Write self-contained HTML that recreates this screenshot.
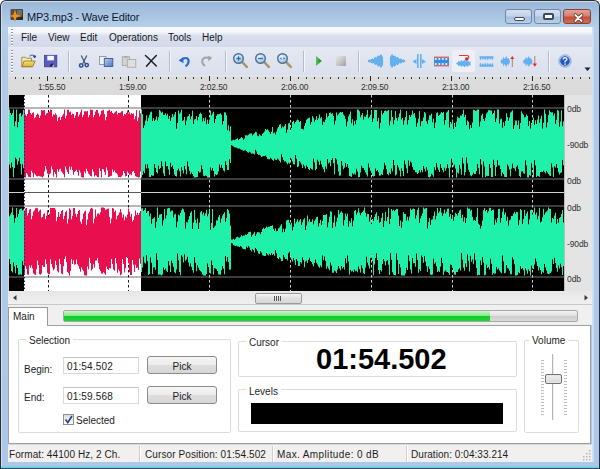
<!DOCTYPE html>
<html><head><meta charset="utf-8">
<style>
*{margin:0;padding:0;box-sizing:border-box}
html,body{width:600px;height:469px;overflow:hidden;background:#fff}
body{font-family:"Liberation Sans",sans-serif;font-size:10px;color:#1e1e1e;position:relative}
.a{position:absolute}
#frame{left:0;top:0;width:600px;height:469px;background:linear-gradient(#9bb8d8 2px,#a6c2e0 12px,#b5cfea 26px,#b0cbe9 60px,#abc8e8);border:1px solid #2c2f36;border-bottom-color:#3a4a5a;border-radius:6px 6px 0 0;box-shadow:inset 0 1px 0 #d0dfee,inset 1px 0 0 #d0dfee}
#title{left:27px;top:11px;font-size:11px;letter-spacing:-0.2px;color:#101a2c;white-space:nowrap}
.wb{top:9px;height:15px;border:1px solid #7088a6;border-radius:3px;background:linear-gradient(#d3e1f0,#c2d4ea 45%,#a9bfdc 55%,#b9cfe8)}
#menubar{left:8px;top:27px;width:584px;height:21px;background:linear-gradient(#f8fafd 0,#f3f5fa 5px,#d9dfee 9px,#d3daeb 100%);border-bottom:1px solid #e6eaf3}
.mi{top:32px;font-size:10px;color:#161a22}
#toolbar{left:8px;top:48px;width:584px;height:27px;background:linear-gradient(#e4e8f2,#dae0ed)}
.sep{top:51px;width:1px;height:21px;background:#b4bccb;box-shadow:1px 0 0 #f4f6fa}
#ruler{left:8px;top:75px;width:584px;height:20px;background:linear-gradient(#e6e6e6,#dcdcdc 3px,#dbdbdb)}
.tick{top:77px;width:1px;height:2px;background:#333}
.mtick{top:76px;width:1px;height:5px;background:#222}
.rl{top:82px;font-size:8.5px;letter-spacing:-0.15px;color:#303030}
#wave{left:9px;top:95px;width:583px;height:196px;background:#000;box-shadow:-1px 0 0 #d4d4d4}
#dbcol{left:564px;top:95px;width:28px;height:196px;background:#e4e4e4;border-left:1px solid #bbb}
.db{font-size:8.5px;letter-spacing:-0.1px;color:#303030;left:567px}
#hscroll{left:8px;top:291px;width:584px;height:14px;background:linear-gradient(#e6e6e6,#f0f0f0);border-bottom:1px solid #c8c8c8}
#tabarea{left:8px;top:305px;width:584px;height:20px;background:#f0f0f0}
#panel{left:8px;top:325px;width:583px;height:119px;background:#fff;border:1px solid #a0a0a0}
#tab{left:8px;top:307px;width:40px;height:19px;background:#fff;border:1px solid #9a9a9a;border-bottom:none}
.gb{border:1px solid #dcdcdc;border-radius:2px;box-shadow:1px 1px 0 #fff inset}
.gl{background:#fff;padding:0 3px;font-size:10px;color:#1e1e1e}
.tb{border:1px solid #dadada;border-top-color:#c4c4c4;background:#fff;font-size:10px;padding-left:3px;line-height:17px;letter-spacing:0.15px;color:#222}
.btn{border:1px solid #8c8c8c;border-radius:3px;background:linear-gradient(#f5f5f5,#ececec 50%,#dedede 51%,#d6d6d6);font-size:10px;text-align:center;line-height:19px;color:#222}
#status{left:8px;top:444px;width:584px;height:18px;background:#f1f0ef;border-top:1px solid #d8d8d8}
.st{top:449px;font-size:10px;color:#1e1e1e;white-space:nowrap}
.ssep{top:446px;width:1px;height:16px;background:#cfcfcf;box-shadow:1px 0 0 #fff}
</style></head><body>
<div class="a" id="frame"></div>
<!-- app icon -->
<svg class="a" style="left:9px;top:8px" width="15" height="15" viewBox="0 0 15 15">
<defs><linearGradient id="ig" x1="0" y1="0" x2="1" y2="1"><stop offset="0" stop-color="#5a5048"/><stop offset="0.5" stop-color="#4a4a44"/><stop offset="1" stop-color="#20180e"/></linearGradient></defs>
<rect x="1.5" y="1" width="12.5" height="11" rx="1" fill="url(#ig)"/>
<rect x="8" y="2" width="5" height="5" fill="#6c7068"/>
<path d="M6 1.5 L7.5 6.5 L14 8 L7.5 9.3 L6 14.5 L4.5 9.3 L0.5 8 L4.5 6.5Z" fill="#f0901e"/>
</svg>
<div class="a" id="title">MP3.mp3 - Wave Editor</div>
<div class="a wb" style="left:505px;width:27px"><div class="a" style="left:8px;top:7px;width:11px;height:4px;border:1px solid #3e4a5a;background:#f4f6f9;border-radius:2px"></div></div>
<div class="a wb" style="left:534px;width:27px"><div class="a" style="left:8px;top:3px;width:11px;height:7px;border:2px solid #3e4a5a;border-top-width:2px;background:#fafbfc;border-radius:2px"></div></div>
<div class="a wb" style="left:563px;width:28px;border-color:#80453b;background:linear-gradient(#e2a397,#d7806f 45%,#c44f38 55%,#d46c55)">
<svg class="a" style="left:8.5px;top:2.5px" width="11" height="10" viewBox="0 0 11 10"><path d="M2.3 2 L8.7 8 M8.7 2 L2.3 8" stroke="#5a2a22" stroke-width="3.2" stroke-linecap="round"/><path d="M2.3 2 L8.7 8 M8.7 2 L2.3 8" stroke="#fff" stroke-width="1.8" stroke-linecap="round"/></svg></div>

<div class="a" id="menubar"></div>
<div class="a" style="left:11px;top:29px;width:2px;height:18px;background:repeating-linear-gradient(#8a94a8 0 1px,#fff 1px 2px,transparent 2px 3px)"></div>
<div class="a mi" style="left:21px">File</div>
<div class="a mi" style="left:48px">View</div>
<div class="a mi" style="left:80px">Edit</div>
<div class="a mi" style="left:109px">Operations</div>
<div class="a mi" style="left:168px">Tools</div>
<div class="a mi" style="left:202px">Help</div>

<div class="a" id="toolbar"></div>
<svg width="0" height="0" style="position:absolute"><defs><radialGradient id="zg" cx="0.4" cy="0.35" r="0.7"><stop offset="0" stop-color="#eef7ff"/><stop offset="0.6" stop-color="#b4d6f2"/><stop offset="1" stop-color="#7eaed8"/></radialGradient></defs></svg>
<div class="a" style="left:11px;top:50px;width:2px;height:24px;background:repeating-linear-gradient(#8a94a8 0 1px,#fff 1px 2px,transparent 2px 3px)"></div>
<svg class="a" style="left:20px;top:53px" width="17" height="16" viewBox="0 0 17 16">
<defs><linearGradient id="fg" x1="0" y1="0" x2="0" y2="1"><stop offset="0" stop-color="#f6e27a"/><stop offset="1" stop-color="#dcae28"/></linearGradient></defs>
<path d="M1.8 4.3 L5.5 4.3 L6.5 5.3 L11.5 5.3 L11.5 13.6 L1.8 13.6Z" fill="#f2eca8" stroke="#8c7c3a" stroke-width="0.8"/>
<path d="M4 8 L15.2 8 L12.6 13.8 L1.8 13.8Z" fill="url(#fg)" stroke="#86702a" stroke-width="0.8"/>
<path d="M9.5 3.3 Q12 1.2 14.2 3" stroke="#6a80a8" stroke-width="1.1" fill="none"/><circle cx="14.6" cy="3.6" r="1.3" fill="#26407e"/></svg>
<svg class="a" style="left:43px;top:54px" width="15" height="14" viewBox="0 0 15 14">
<rect x="1.5" y="1.3" width="12.3" height="11.5" fill="#5a5cbc"/>
<rect x="1.5" y="1.3" width="12.3" height="11.5" fill="none" stroke="#3c3c96" stroke-width="0.8"/>
<rect x="4.3" y="1.8" width="6.6" height="4.6" fill="#f6f6fc"/>
<path d="M6.5 12.5 L8 9.8 L10.5 9.8 L9.5 12.5Z" fill="#1e1e40"/><path d="M9 12.6 L10.3 10.4 L11.2 12.6Z" fill="#e8e8f4"/></svg>
<div class="a sep" style="left:68px"></div>
<svg class="a" style="left:78px;top:54px" width="12" height="14" viewBox="0 0 12 14">
<path d="M3.3 1.5 L7.2 9.5 M8.8 1.5 L4.8 9.5" stroke="#44506a" stroke-width="1.2"/>
<circle cx="3.2" cy="11.4" r="1.7" fill="none" stroke="#2c4c98" stroke-width="1.5"/><circle cx="8.7" cy="11.1" r="1.7" fill="none" stroke="#2c4c98" stroke-width="1.5"/></svg>
<svg class="a" style="left:98px;top:55px" width="16" height="13" viewBox="0 0 16 13">
<defs><linearGradient id="cg" x1="0" y1="0" x2="1" y2="1"><stop offset="0" stop-color="#b8d0ee"/><stop offset="1" stop-color="#4a78c0"/></linearGradient></defs>
<rect x="1.5" y="1.5" width="6.5" height="8" fill="#f0f2f6" stroke="#8c96a8" stroke-width="0.9"/>
<rect x="6.3" y="3.5" width="8.5" height="8" fill="url(#cg)" stroke="#3a5a98" stroke-width="0.9"/></svg>
<svg class="a" style="left:121px;top:55px" width="16" height="13" viewBox="0 0 16 13">
<rect x="1.3" y="1.8" width="7.2" height="8.8" fill="#d2d2d2" stroke="#a6a6a6" stroke-width="0.9"/>
<rect x="3.3" y="1" width="3.2" height="1.8" fill="#a8a8a8"/>
<rect x="6.3" y="4.5" width="8.5" height="7.8" fill="#dedede" stroke="#aaaaaa" stroke-width="0.9"/></svg>
<svg class="a" style="left:144px;top:54px" width="14" height="14" viewBox="0 0 14 14">
<path d="M1.5 1.5 Q6.5 6 12.3 12 M12.3 1.5 Q7 6.8 2.5 12.2" stroke="#1e1e1e" stroke-width="1.5" fill="none" stroke-linecap="round"/></svg>
<div class="a sep" style="left:169px"></div>
<svg class="a" style="left:177px;top:54px" width="15" height="14" viewBox="0 0 15 14">
<path d="M4.5 6 Q8 3 10.5 4.5 Q12.5 6.5 11 9.5 Q10 11.5 8.5 12.3" stroke="#2e6ad4" stroke-width="2.2" fill="none"/>
<path d="M1.5 6.5 L6.3 3 L6.5 9.2Z" fill="#2e6ad4"/></svg>
<svg class="a" style="left:200px;top:54px" width="14" height="14" viewBox="0 0 14 14">
<path d="M9.5 4.5 Q6 2.5 3.5 4.5 Q1.5 6.5 2.5 9 Q3.5 11 5 12" stroke="#a4a4a4" stroke-width="2" fill="none"/>
<path d="M12.3 3.5 L8 1.8 L8.5 7.5Z" fill="#a4a4a4"/></svg>
<div class="a sep" style="left:225px"></div>
<svg class="a" style="left:232px;top:52px" width="17" height="17" viewBox="0 0 17 17">
<path d="M10.2 10.2 L14.8 14.8" stroke="#a89868" stroke-width="2.6" stroke-linecap="round"/>
<circle cx="6.5" cy="6.5" r="4.8" fill="url(#zg)" stroke="#56708e" stroke-width="1.4"/><path d="M4.3 6.5 H8.7 M6.5 4.3 V8.7" stroke="#2a6cc0" stroke-width="1.3"/></svg>
<svg class="a" style="left:254px;top:52px" width="17" height="17" viewBox="0 0 17 17">
<path d="M10.2 10.2 L14.8 14.8" stroke="#a89868" stroke-width="2.6" stroke-linecap="round"/>
<circle cx="6.5" cy="6.5" r="4.8" fill="url(#zg)" stroke="#56708e" stroke-width="1.4"/><path d="M4.2 6.5 H8.8" stroke="#2a6cc0" stroke-width="1.4"/></svg>
<svg class="a" style="left:276px;top:52px" width="17" height="17" viewBox="0 0 17 17">
<path d="M10.2 10.2 L14.8 14.8" stroke="#a89868" stroke-width="2.6" stroke-linecap="round"/>
<circle cx="6.5" cy="6.5" r="4.8" fill="url(#zg)" stroke="#56708e" stroke-width="1.4"/><path d="M3.8 6.5 L5.6 5.2 L5.6 7.8Z M9.2 6.5 L7.4 5.2 L7.4 7.8Z" fill="#2a6cc0"/></svg>
<div class="a sep" style="left:303px"></div>
<svg class="a" style="left:315px;top:55px" width="8" height="12" viewBox="0 0 8 12"><defs><linearGradient id="pg" x1="0" x2="1"><stop offset="0" stop-color="#5cc85c"/><stop offset="1" stop-color="#1a7a1a"/></linearGradient></defs><path d="M1 1 L6.8 6 L1 11Z" fill="url(#pg)"/></svg>
<div class="a" style="left:336px;top:56px;width:10px;height:10px;border-radius:1px;background:linear-gradient(135deg,#e4e4e4,#c8c8c8 50%,#9c9c9c)"></div>
<div class="a sep" style="left:358px"></div>
<svg class="a" style="left:367px;top:53px" width="17" height="16" viewBox="0 0 17 16">
<path d="M1.5 7.0 V9.0 M2.5 6.5 V9.5 M3.5 6.8 V9.2 M4.5 6.0 V10.0 M5.5 5.5 V10.5 M6.5 6.0 V10.0 M7.5 4.8 V11.2 M8.5 4.0 V12.0 M9.5 4.5 V11.5 M10.5 3.2 V12.8 M11.5 2.5 V13.5 M12.5 3.0 V13.0 M13.5 1.5 V14.5 M14.5 1.8 V14.2 M15.5 3.5 V12.5" stroke="#62b0f0" stroke-width="1.15"/><path d="M1 8 H15" stroke="#62b0f0" stroke-width="2"/></svg>
<svg class="a" style="left:389px;top:53px" width="17" height="16" viewBox="0 0 17 16">
<path d="M15.5 7.0 V9.0 M14.5 6.5 V9.5 M13.5 6.8 V9.2 M12.5 6.0 V10.0 M11.5 5.5 V10.5 M10.5 6.0 V10.0 M9.5 4.8 V11.2 M8.5 4.0 V12.0 M7.5 4.5 V11.5 M6.5 3.2 V12.8 M5.5 2.5 V13.5 M4.5 3.0 V13.0 M3.5 1.5 V14.5 M2.5 1.8 V14.2 M1.5 3.5 V12.5" stroke="#62b0f0" stroke-width="1.15"/><path d="M2 8 H16" stroke="#62b0f0" stroke-width="2"/></svg>
<svg class="a" style="left:411px;top:53px" width="16" height="16" viewBox="0 0 16 16">
<rect x="6" y="1" width="1.6" height="14" fill="#62b0f0"/><rect x="9" y="1" width="1.6" height="14" fill="#62b0f0"/>
<path d="M1.5 8.5 L5.5 6 L5.5 11Z M15 8.5 L11 6 L11 11Z" fill="#62b0f0"/></svg>
<svg class="a" style="left:433px;top:55px" width="17" height="13" viewBox="0 0 17 13">
<rect x="1" y="1.6" width="15" height="1.3" fill="#e05a5a"/><rect x="1" y="10.1" width="15" height="1.3" fill="#e05a5a"/>
<rect x="1" y="2.9" width="15" height="7.2" fill="#3a8ee0"/>
<g fill="#e8f4ff"><ellipse cx="2.8" cy="4" rx="1.1" ry="0.9"/><ellipse cx="6.3" cy="4" rx="1.1" ry="0.9"/><ellipse cx="9.8" cy="4" rx="1.1" ry="0.9"/><ellipse cx="13.3" cy="4" rx="1.1" ry="0.9"/>
<ellipse cx="2.8" cy="9" rx="1.1" ry="0.9"/><ellipse cx="6.3" cy="9" rx="1.1" ry="0.9"/><ellipse cx="9.8" cy="9" rx="1.1" ry="0.9"/><ellipse cx="13.3" cy="9" rx="1.1" ry="0.9"/></g></svg>
<div class="a" style="left:452px;top:50px;width:23px;height:22px;background:#eef0f5;border-radius:2px"></div>
<svg class="a" style="left:455px;top:53px" width="18" height="16" viewBox="0 0 18 16">
<path d="M4 2.5 H12 Q14.5 2.5 13.5 5.2" stroke="#e03a3a" stroke-width="1.2" fill="none"/><circle cx="11.8" cy="6" r="1.8" fill="#e02020"/>
<path d="M1 10.5 L3 9 L4 7.5 L5 9 L6.5 7 L8 8.5 L9.5 6.5 L11 8.5 L12.5 7 L14 9 L15.5 8 L15.5 13 L14 12 L12.5 14 L11 12.5 L9.5 14.5 L8 12.5 L6.5 14 L5 12 L4 13.5 L3 12Z" fill="#62b0f0"/></svg>
<svg class="a" style="left:478px;top:55px" width="17" height="13" viewBox="0 0 17 13">
<path d="M1.5 1.2 H15.5 V2.8 L14.5 5.5 L13.5 3 L12.2 5 L11 3 L9.8 5.5 L8.5 3 L7.2 5.5 L6 3 L4.8 5 L3.5 3 L2.5 5.5 L1.5 3Z" fill="#62b0f0"/>
<path d="M1.5 11.8 H15.5 V10.2 L14.5 7.5 L13.5 10 L12.2 8 L11 10 L9.8 7.5 L8.5 10 L7.2 7.5 L6 10 L4.8 8 L3.5 10 L2.5 7.5 L1.5 10Z" fill="#62b0f0"/></svg>
<svg class="a" style="left:500px;top:54px" width="16" height="15" viewBox="0 0 16 15">
<path d="M0.5 7.5 L1.5 5 L2.5 6 L3.5 2.5 L4.5 5 L5.5 3.5 L6.5 2 L7.5 5 L8.5 4 L9.5 6 L10 7.5 L9.5 9 L8.5 11 L7.5 10 L6.5 13 L5.5 11.5 L4.5 10 L3.5 12.5 L2.5 9 L1.5 10Z" fill="#62b0f0"/>
<path d="M12.3 5 V13" stroke="#c07878" stroke-width="1"/><path d="M10.3 5 L12.3 2 L14.3 5Z" fill="#e02a2a"/></svg>
<svg class="a" style="left:522px;top:54px" width="17" height="15" viewBox="0 0 17 15">
<path d="M1 7.5 L2 5 L3 6 L4 2.5 L5 5 L6 3.5 L7 2 L8 5 L9 4 L10 6 L10.5 7.5 L10 9 L9 11 L8 10 L7 13 L6 11.5 L5 10 L4 12.5 L3 9 L2 10Z" fill="#62b0f0"/>
<path d="M12.8 2 V10" stroke="#c07878" stroke-width="1"/><path d="M10.6 9.5 L12.8 12.8 L15 9.5Z" fill="#e02a2a"/></svg>
<div class="a sep" style="left:548px"></div>
<svg class="a" style="left:558px;top:54px" width="14" height="14" viewBox="0 0 14 14">
<circle cx="7" cy="7" r="5.3" fill="#2356c0" stroke="#a8c0e8" stroke-width="1.1"/>
<circle cx="7" cy="7" r="6.2" fill="none" stroke="#6a88b8" stroke-width="0.6"/>
<path d="M5.2 5.4 Q5.2 3.7 7.1 3.7 Q8.9 3.7 8.9 5.2 Q8.9 6.3 7.1 7.2 L7.1 8.4" stroke="#dfe9fb" stroke-width="1.4" fill="none"/><circle cx="7.1" cy="10.1" r="0.9" fill="#dfe9fb"/></svg>
<svg class="a" style="left:584px;top:67px" width="7" height="5"><path d="M0.5 0.5 H6.5 L3.5 4Z" fill="#222"/></svg>

<div class="a" id="ruler"></div>
<div class="a tick" style="left:15px"></div>
<div class="a tick" style="left:23px"></div>
<div class="a tick" style="left:31px"></div>
<div class="a tick" style="left:39px"></div>
<div class="a tick" style="left:55px"></div>
<div class="a tick" style="left:63px"></div>
<div class="a tick" style="left:71px"></div>
<div class="a tick" style="left:80px"></div>
<div class="a tick" style="left:88px"></div>
<div class="a tick" style="left:96px"></div>
<div class="a tick" style="left:104px"></div>
<div class="a tick" style="left:112px"></div>
<div class="a tick" style="left:120px"></div>
<div class="a tick" style="left:136px"></div>
<div class="a tick" style="left:144px"></div>
<div class="a tick" style="left:152px"></div>
<div class="a tick" style="left:160px"></div>
<div class="a tick" style="left:168px"></div>
<div class="a tick" style="left:176px"></div>
<div class="a tick" style="left:185px"></div>
<div class="a tick" style="left:193px"></div>
<div class="a tick" style="left:201px"></div>
<div class="a tick" style="left:217px"></div>
<div class="a tick" style="left:225px"></div>
<div class="a tick" style="left:233px"></div>
<div class="a tick" style="left:241px"></div>
<div class="a tick" style="left:249px"></div>
<div class="a tick" style="left:257px"></div>
<div class="a tick" style="left:265px"></div>
<div class="a tick" style="left:273px"></div>
<div class="a tick" style="left:282px"></div>
<div class="a tick" style="left:298px"></div>
<div class="a tick" style="left:306px"></div>
<div class="a tick" style="left:314px"></div>
<div class="a tick" style="left:322px"></div>
<div class="a tick" style="left:330px"></div>
<div class="a tick" style="left:338px"></div>
<div class="a tick" style="left:346px"></div>
<div class="a tick" style="left:354px"></div>
<div class="a tick" style="left:362px"></div>
<div class="a tick" style="left:378px"></div>
<div class="a tick" style="left:387px"></div>
<div class="a tick" style="left:395px"></div>
<div class="a tick" style="left:403px"></div>
<div class="a tick" style="left:411px"></div>
<div class="a tick" style="left:419px"></div>
<div class="a tick" style="left:427px"></div>
<div class="a tick" style="left:435px"></div>
<div class="a tick" style="left:443px"></div>
<div class="a tick" style="left:459px"></div>
<div class="a tick" style="left:467px"></div>
<div class="a tick" style="left:475px"></div>
<div class="a tick" style="left:484px"></div>
<div class="a tick" style="left:492px"></div>
<div class="a tick" style="left:500px"></div>
<div class="a tick" style="left:508px"></div>
<div class="a tick" style="left:516px"></div>
<div class="a tick" style="left:524px"></div>
<div class="a tick" style="left:540px"></div>
<div class="a tick" style="left:548px"></div>
<div class="a tick" style="left:556px"></div>
<div class="a tick" style="left:564px"></div>
<div class="a tick" style="left:572px"></div>
<div class="a tick" style="left:580px"></div>
<div class="a tick" style="left:589px"></div>
<div class="a mtick" style="left:47px"></div>
<div class="a rl" style="left:38px">1:55.50</div>
<div class="a mtick" style="left:128px"></div>
<div class="a rl" style="left:119px">1:59.00</div>
<div class="a mtick" style="left:209px"></div>
<div class="a rl" style="left:200px">2:02.50</div>
<div class="a mtick" style="left:290px"></div>
<div class="a rl" style="left:281px">2:06.00</div>
<div class="a mtick" style="left:370px"></div>
<div class="a rl" style="left:361px">2:09.50</div>
<div class="a mtick" style="left:451px"></div>
<div class="a rl" style="left:442px">2:13.00</div>
<div class="a mtick" style="left:532px"></div>
<div class="a rl" style="left:523px">2:16.50</div>

<div class="a" id="wave"></div>
<svg class="a" style="left:0;top:0" width="600" height="300" viewBox="0 0 600 300">
<rect x="24" y="95" width="117" height="196" fill="#fff"/>
<rect x="9" y="107.5" width="555" height="1" fill="#7a7a7a"/>
<rect x="9" y="178.5" width="555" height="1" fill="#7a7a7a"/>
<rect x="9" y="192" width="555" height="1" fill="#d0d0d0"/>
<rect x="9" y="205.5" width="555" height="1" fill="#7a7a7a"/>
<rect x="9" y="276.5" width="555" height="1" fill="#7a7a7a"/>
<rect x="24" y="107.5" width="117" height="1" fill="#b0b0b0"/>
<rect x="24" y="178.5" width="117" height="1" fill="#b0b0b0"/>
<rect x="24" y="205.5" width="117" height="1" fill="#b0b0b0"/>
<rect x="24" y="276.5" width="117" height="1" fill="#b0b0b0"/>
<rect x="24" y="192" width="117" height="1" fill="#5a5a5a"/>
<line x1="48.5" y1="95" x2="48.5" y2="291" stroke="#1a1a1a" stroke-width="1" stroke-dasharray="2.5 2.5"/>
<line x1="128.5" y1="95" x2="128.5" y2="291" stroke="#1a1a1a" stroke-width="1" stroke-dasharray="2.5 2.5"/>
<line x1="209.5" y1="95" x2="209.5" y2="291" stroke="#cfcfcf" stroke-width="1" stroke-dasharray="2.5 2.5"/>
<line x1="290.5" y1="95" x2="290.5" y2="291" stroke="#cfcfcf" stroke-width="1" stroke-dasharray="2.5 2.5"/>
<line x1="371.5" y1="95" x2="371.5" y2="291" stroke="#cfcfcf" stroke-width="1" stroke-dasharray="2.5 2.5"/>
<line x1="452.5" y1="95" x2="452.5" y2="291" stroke="#cfcfcf" stroke-width="1" stroke-dasharray="2.5 2.5"/>
<line x1="532.5" y1="95" x2="532.5" y2="291" stroke="#cfcfcf" stroke-width="1" stroke-dasharray="2.5 2.5"/>
<path d="M9,109.6 10,109.6 10,112.9 11,112.9 11,114.9 12,114.9 12,113.3 13,113.3 13,109.6 14,109.6 14,126.3 15,126.3 15,121.3 16,121.3 16,109.6 17,109.6 17,127.3 18,127.3 18,121.9 19,121.9 19,113.7 20,113.7 20,113.1 21,113.1 21,116.5 22,116.5 22,114.4 23,114.4 23,110.0 24,110.0 24,168.2 23,168.2 23,164.2 22,164.2 22,174.4 21,174.4 21,163.7 20,163.7 20,157.8 19,157.8 19,161.3 18,161.3 18,164.7 17,164.7 17,159.2 16,159.2 16,157.7 15,157.7 15,168.1 14,168.1 14,177.2 13,177.2 13,167.0 12,167.0 12,162.5 11,162.5 11,168.3 10,168.3 10,164.4 9,164.4Z M141,109.6 142,109.6 142,114.0 143,114.0 143,128.0 144,128.0 144,125.3 145,125.3 145,120.6 146,120.6 146,115.2 147,115.2 147,121.2 148,121.2 148,117.7 149,117.7 149,114.8 150,114.8 150,112.3 151,112.3 151,111.4 152,111.4 152,121.0 153,121.0 153,118.1 154,118.1 154,121.1 155,121.1 155,119.5 156,119.5 156,116.5 157,116.5 157,120.5 158,120.5 158,117.2 159,117.2 159,109.9 160,109.9 160,111.3 161,111.3 161,112.8 162,112.8 162,111.8 163,111.8 163,115.0 164,115.0 164,115.0 165,115.0 165,113.3 166,113.3 166,115.4 167,115.4 167,113.7 168,113.7 168,118.7 169,118.7 169,115.9 170,115.9 170,120.9 171,120.9 171,117.5 172,117.5 172,113.9 173,113.9 173,116.8 174,116.8 174,114.6 175,114.6 175,112.1 176,112.1 176,128.8 177,128.8 177,123.0 178,123.0 178,110.6 179,110.6 179,113.8 180,113.8 180,112.5 181,112.5 181,109.7 182,109.7 182,120.9 183,120.9 183,120.3 184,120.3 184,117.1 185,117.1 185,125.1 186,125.1 186,120.4 187,120.4 187,116.4 188,116.4 188,116.0 189,116.0 189,114.1 190,114.1 190,119.2 191,119.2 191,116.3 192,116.3 192,110.7 193,110.7 193,124.0 194,124.0 194,119.6 195,119.6 195,119.0 196,119.0 196,116.1 197,116.1 197,120.3 198,120.3 198,117.1 199,117.1 199,114.1 200,114.1 200,112.7 201,112.7 201,113.9 202,113.9 202,121.5 203,121.5 203,117.9 204,117.9 204,121.0 205,121.0 205,117.6 206,117.6 206,124.2 207,124.2 207,119.8 208,119.8 208,123.9 209,123.9 209,119.6 210,119.6 210,110.6 211,110.6 211,115.4 212,115.4 212,113.6 213,113.6 213,111.8 214,111.8 214,123.0 215,123.0 215,119.1 216,119.1 216,115.7 217,115.7 217,114.2 218,114.2 218,114.2 219,114.2 219,114.0 220,114.0 220,113.2 221,113.2 221,114.7 222,114.7 222,124.6 223,124.6 223,120.9 224,120.9 224,112.3 225,112.3 225,112.5 226,112.5 226,115.3 227,115.3 227,130.2 228,130.2 228,125.3 229,125.3 229,131.2 230,131.2 230,126.2 231,126.2 231,140.7 232,140.7 232,140.3 233,140.3 233,139.8 234,139.8 234,140.2 235,140.2 235,139.6 236,139.6 236,138.9 237,138.9 237,138.3 238,138.3 238,139.9 239,139.9 239,139.1 240,139.1 240,138.3 241,138.3 241,137.0 242,137.0 242,138.1 243,138.1 243,139.7 244,139.7 244,138.4 245,138.4 245,135.3 246,135.3 246,135.2 247,135.2 247,135.4 248,135.4 248,134.8 249,134.8 249,133.8 250,133.8 250,133.6 251,133.6 251,133.6 252,133.6 252,135.4 253,135.4 253,134.3 254,134.3 254,133.3 255,133.3 255,131.8 256,131.8 256,132.2 257,132.2 257,135.8 258,135.8 258,136.2 259,136.2 259,134.3 260,134.3 260,135.4 261,135.4 261,135.9 262,135.9 262,133.8 263,133.8 263,132.7 264,132.7 264,131.4 265,131.4 265,128.9 266,128.9 266,130.1 267,130.1 267,129.2 268,129.2 268,130.5 269,130.5 269,132.3 270,132.3 270,134.0 271,134.0 271,131.7 272,131.7 272,127.1 273,127.1 273,133.2 274,133.2 274,132.4 275,132.4 275,134.4 276,134.4 276,131.5 277,131.5 277,128.4 278,128.4 278,127.1 279,127.1 279,124.8 280,124.8 280,124.3 281,124.3 281,128.2 282,128.2 282,126.6 283,126.6 283,127.3 284,127.3 284,125.8 285,125.8 285,123.9 286,123.9 286,132.8 287,132.8 287,129.4 288,129.4 288,123.5 289,123.5 289,122.7 290,122.7 290,131.3 291,131.3 291,128.1 292,128.1 292,122.0 293,122.0 293,120.8 294,120.8 294,123.4 295,123.4 295,122.1 296,122.1 296,120.4 297,120.4 297,119.4 298,119.4 298,120.2 299,120.2 299,122.1 300,122.1 300,121.0 301,121.0 301,128.7 302,128.7 302,128.9 303,128.9 303,129.5 304,129.5 304,125.9 305,125.9 305,122.9 306,122.9 306,119.8 307,119.8 307,118.8 308,118.8 308,118.1 309,118.1 309,117.4 310,117.4 310,124.5 311,124.5 311,121.9 312,121.9 312,116.1 313,116.1 313,117.7 314,117.7 314,121.8 315,121.8 315,119.7 316,119.7 316,116.3 317,116.3 317,120.1 318,120.1 318,118.3 319,118.3 319,114.5 320,114.5 320,118.3 321,118.3 321,117.1 322,117.1 322,124.9 323,124.9 323,121.4 324,121.4 324,122.2 325,122.2 325,119.4 326,119.4 326,113.2 327,113.2 327,117.3 328,117.3 328,115.9 329,115.9 329,112.9 330,112.9 330,112.6 331,112.6 331,113.7 332,113.7 332,113.2 333,113.2 333,115.9 334,115.9 334,124.4 335,124.4 335,120.5 336,120.5 336,112.5 337,112.5 337,115.6 338,115.6 338,114.3 339,114.3 339,112.7 340,112.7 340,112.1 341,112.1 341,112.4 342,112.4 342,111.9 343,111.9 343,114.5 344,114.5 344,115.8 345,115.8 345,118.9 346,118.9 346,126.4 347,126.4 347,121.5 348,121.5 348,116.2 349,116.2 349,114.3 350,114.3 350,111.5 351,111.5 351,123.3 352,123.3 352,119.2 353,119.2 353,125.4 354,125.4 354,120.7 355,120.7 355,124.3 356,124.3 356,119.9 357,119.9 357,109.6 358,109.6 358,109.8 359,109.8 359,111.3 360,111.3 360,117.2 361,117.2 361,114.9 362,114.9 362,113.1 363,113.1 363,119.5 364,119.5 364,116.5 365,116.5 365,116.9 366,116.9 366,114.7 367,114.7 367,110.0 368,110.0 368,118.3 369,118.3 369,117.1 370,117.1 370,114.8 371,114.8 371,110.9 372,110.9 372,122.0 373,122.0 373,118.2 374,118.2 374,110.0 375,110.0 375,110.0 376,110.0 376,109.9 377,109.9 377,121.3 378,121.3 378,117.8 379,117.8 379,128.5 380,128.5 380,122.8 381,122.8 381,110.4 382,110.4 382,114.6 383,114.6 383,113.0 384,113.0 384,111.1 385,111.1 385,110.6 386,110.6 386,111.3 387,111.3 387,110.7 388,110.7 388,109.9 389,109.9 389,125.4 390,125.4 390,120.7 391,120.7 391,110.2 392,110.2 392,117.0 393,117.0 393,124.3 394,124.3 394,119.8 395,119.8 395,111.1 396,111.1 396,118.0 397,118.0 397,120.6 398,120.6 398,117.3 399,117.3 399,113.5 400,113.5 400,109.7 401,109.7 401,119.4 402,119.4 402,117.8 403,117.8 403,124.8 404,124.8 404,120.2 405,120.2 405,117.0 406,117.0 406,111.0 407,111.0 407,124.6 408,124.6 408,120.1 409,120.1 409,115.1 410,115.1 410,117.0 411,117.0 411,114.8 412,114.8 412,110.8 413,110.8 413,114.3 414,114.3 414,112.9 415,112.9 415,117.8 416,117.8 416,126.7 417,126.7 417,122.8 418,122.8 418,118.8 419,118.8 419,111.1 420,111.1 420,126.2 421,126.2 421,121.2 422,121.2 422,120.9 423,120.9 423,117.5 424,117.5 424,112.1 425,112.1 425,113.2 426,113.2 426,121.3 427,121.3 427,124.0 428,124.0 428,119.7 429,119.7 429,115.3 430,115.3 430,115.6 431,115.6 431,113.8 432,113.8 432,122.2 433,122.2 433,118.4 434,118.4 434,127.9 435,127.9 435,122.4 436,122.4 436,113.3 437,113.3 437,112.2 438,112.2 438,116.0 439,116.0 439,115.1 440,115.1 440,113.4 441,113.4 441,112.0 442,112.0 442,112.9 443,112.9 443,111.9 444,111.9 444,124.6 445,124.6 445,120.1 446,120.1 446,112.4 447,112.4 447,111.6 448,111.6 448,110.1 449,110.1 449,127.5 450,127.5 450,122.1 451,122.1 451,123.6 452,123.6 452,119.4 453,119.4 453,128.9 454,128.9 454,123.1 455,123.1 455,126.9 456,126.9 456,121.7 457,121.7 457,116.8 458,116.8 458,117.8 459,117.8 459,118.3 460,118.3 460,115.6 461,115.6 461,115.8 462,115.8 462,113.9 463,113.9 463,109.8 464,109.8 464,116.9 465,116.9 465,114.7 466,114.7 466,125.3 467,125.3 467,120.5 468,120.5 468,121.6 469,121.6 469,129.2 470,129.2 470,124.9 471,124.9 471,128.1 472,128.1 472,122.5 473,122.5 473,109.7 474,109.7 474,109.9 475,109.9 475,110.9 476,110.9 476,110.5 477,110.5 477,109.6 478,109.6 478,109.6 479,109.6 479,126.5 480,126.5 480,121.4 481,121.4 481,115.5 482,115.5 482,113.7 483,113.7 483,118.9 484,118.9 484,121.1 485,121.1 485,117.7 486,117.7 486,113.5 487,113.5 487,112.3 488,112.3 488,110.3 489,110.3 489,110.0 490,110.0 490,110.5 491,110.5 491,110.6 492,110.6 492,114.3 493,114.3 493,112.9 494,112.9 494,110.6 495,110.6 495,122.1 496,122.1 496,118.3 497,118.3 497,109.5 498,109.5 498,109.5 499,109.5 499,123.5 500,123.5 500,119.3 501,119.3 501,118.4 502,118.4 502,127.7 503,127.7 503,122.3 504,122.3 504,125.9 505,125.9 505,121.0 506,121.0 506,113.2 507,113.2 507,117.0 508,117.0 508,120.8 509,120.8 509,117.4 510,117.4 510,112.5 511,112.5 511,111.6 512,111.6 512,110.3 513,110.3 513,128.9 514,128.9 514,125.2 515,125.2 515,120.5 516,120.5 516,120.4 517,120.4 517,125.1 518,125.1 518,120.4 519,120.4 519,128.9 520,128.9 520,123.1 521,123.1 521,111.3 522,111.3 522,113.4 523,113.4 523,114.8 524,114.8 524,117.4 525,117.4 525,116.7 526,116.7 526,114.6 527,114.6 527,115.9 528,115.9 528,126.0 529,126.0 529,121.0 530,121.0 530,128.6 531,128.6 531,122.9 532,122.9 532,121.3 533,121.3 533,117.8 534,117.8 534,124.8 535,124.8 535,120.2 536,120.2 536,124.0 537,124.0 537,119.6 538,119.6 538,115.5 539,115.5 539,122.7 540,122.7 540,118.8 541,118.8 541,115.4 542,115.4 542,128.4 543,128.4 543,122.7 544,122.7 544,109.6 545,109.6 545,113.8 546,113.8 546,127.6 547,127.6 547,122.2 548,122.2 548,114.9 549,114.9 549,110.2 550,110.2 550,112.0 551,112.0 551,112.5 552,112.5 552,112.3 553,112.3 553,115.4 554,115.4 554,113.6 555,113.6 555,124.1 556,124.1 556,119.8 557,119.8 557,110.1 558,110.1 558,110.8 559,110.8 559,126.7 560,126.7 560,121.5 561,121.5 561,110.2 562,110.2 562,126.2 563,126.2 563,121.2 564,121.2 564,165.2 563,165.2 563,159.9 562,159.9 562,172.2 561,172.2 561,173.1 560,173.1 560,174.5 559,174.5 559,172.3 558,172.3 558,168.1 557,168.1 557,164.0 556,164.0 556,167.5 555,167.5 555,166.2 554,166.2 554,177.0 553,177.0 553,167.6 552,167.6 552,163.4 551,163.4 551,176.0 550,176.0 550,175.4 549,175.4 549,174.0 548,174.0 548,172.5 547,172.5 547,170.7 546,170.7 546,173.5 545,173.5 545,171.7 544,171.7 544,170.8 543,170.8 543,171.9 542,171.9 542,171.7 541,171.7 541,172.0 540,172.0 540,176.7 539,176.7 539,176.2 538,176.2 538,175.7 537,175.7 537,176.9 536,176.9 536,165.4 535,165.4 535,160.2 534,160.2 534,177.2 533,177.2 533,167.6 532,167.6 532,163.3 531,163.3 531,175.8 530,175.8 530,175.1 529,175.1 529,177.4 528,177.4 528,177.4 527,177.4 527,165.4 526,165.4 526,160.2 525,160.2 525,173.8 524,173.8 524,173.2 523,173.2 523,171.3 522,171.3 522,171.4 521,171.4 521,177.2 520,177.2 520,176.1 519,176.1 519,169.0 518,169.0 518,165.3 517,165.3 517,166.7 516,166.7 516,171.3 515,171.3 515,168.6 514,168.6 514,167.9 513,167.9 513,163.7 512,163.7 512,168.7 511,168.7 511,176.2 510,176.2 510,169.6 509,169.6 509,166.3 508,166.3 508,164.6 507,164.6 507,176.9 506,176.9 506,177.0 505,177.0 505,176.8 504,176.8 504,174.1 503,174.1 503,172.6 502,172.6 502,176.2 501,176.2 501,169.1 500,169.1 500,165.5 499,165.5 499,165.5 498,165.5 498,160.3 497,160.3 497,166.9 496,166.9 496,175.9 495,175.9 495,165.0 494,165.0 494,159.7 493,159.7 493,177.1 492,177.1 492,176.9 491,176.9 491,168.1 490,168.1 490,164.1 489,164.1 489,176.1 488,176.1 488,176.2 487,176.2 487,175.8 486,175.8 486,177.0 485,177.0 485,166.4 484,166.4 484,161.6 483,161.6 483,177.4 482,177.4 482,164.6 481,164.6 481,159.1 480,159.1 480,174.3 479,174.3 479,168.1 478,168.1 478,164.1 477,164.1 477,171.2 476,171.2 476,174.0 475,174.0 475,174.1 474,174.1 474,172.7 473,172.7 473,174.7 472,174.7 472,176.2 471,176.2 471,175.6 470,175.6 470,172.0 469,172.0 469,169.7 468,169.7 468,163.4 467,163.4 467,157.4 466,157.4 466,171.9 465,171.9 465,175.6 464,175.6 464,163.6 463,163.6 463,157.7 462,157.7 462,174.8 461,174.8 461,168.8 460,168.8 460,165.1 459,165.1 459,173.6 458,173.6 458,172.5 457,172.5 457,177.5 456,177.5 456,168.6 455,168.6 455,164.8 454,164.8 454,166.6 453,166.6 453,162.0 452,162.0 452,158.7 451,158.7 451,167.6 450,167.6 450,177.4 449,177.4 449,168.3 448,168.3 448,164.3 447,164.3 447,168.2 446,168.2 446,170.7 445,170.7 445,167.8 444,167.8 444,172.3 443,172.3 443,170.1 442,170.1 442,168.1 441,168.1 441,164.1 440,164.1 440,172.1 439,172.1 439,169.7 438,169.7 438,167.4 437,167.4 437,163.1 436,163.1 436,170.3 435,170.3 435,167.2 434,167.2 434,176.7 433,176.7 433,174.8 432,174.8 432,173.7 431,173.7 431,176.4 430,176.4 430,177.4 429,177.4 429,177.0 428,177.0 428,170.3 427,170.3 427,167.2 426,167.2 426,171.4 425,171.4 425,168.8 424,168.8 424,166.0 423,166.0 423,172.3 422,172.3 422,170.0 421,170.0 421,172.4 420,172.4 420,170.2 419,170.2 419,172.9 418,172.9 418,174.0 417,174.0 417,172.5 416,172.5 416,172.2 415,172.2 415,169.9 414,169.9 414,169.8 413,169.8 413,167.1 412,167.1 412,162.7 411,162.7 411,161.6 410,161.6 410,165.7 409,165.7 409,160.6 408,160.6 408,173.2 407,173.2 407,168.3 406,168.3 406,164.4 405,164.4 405,160.6 404,160.6 404,176.0 403,176.0 403,171.1 402,171.1 402,168.3 401,168.3 401,176.5 400,176.5 400,170.6 399,170.6 399,167.6 398,167.6 398,164.9 397,164.9 397,174.4 396,174.4 396,175.4 395,175.4 395,165.2 394,165.2 394,159.9 393,159.9 393,171.2 392,171.2 392,168.5 391,168.5 391,174.1 390,174.1 390,172.7 389,172.7 389,175.3 388,175.3 388,174.3 387,174.3 387,169.2 386,169.2 386,165.6 385,165.6 385,162.8 384,162.8 384,169.5 383,169.5 383,175.0 382,175.0 382,174.0 381,174.0 381,175.5 380,175.5 380,175.8 379,175.8 379,172.2 378,172.2 378,170.0 377,170.0 377,171.1 376,171.1 376,168.4 375,168.4 375,176.1 374,176.1 374,176.5 373,176.5 373,176.1 372,176.1 372,172.8 371,172.8 371,170.8 370,170.8 370,167.7 369,167.7 369,163.6 368,163.6 368,176.6 367,176.6 367,174.6 366,174.6 366,172.2 365,172.2 365,170.0 364,170.0 364,168.1 363,168.1 363,167.7 362,167.7 362,165.8 361,165.8 361,172.5 360,172.5 360,176.9 359,176.9 359,177.2 358,177.2 358,171.4 357,171.4 357,168.8 356,168.8 356,174.7 355,174.7 355,173.5 354,173.5 354,174.5 353,174.5 353,173.3 352,173.3 352,176.9 351,176.9 351,176.3 350,176.3 350,175.9 349,175.9 349,167.9 348,167.9 348,164.1 347,164.1 347,167.0 346,167.0 346,162.9 345,162.9 345,167.7 344,167.7 344,169.2 343,169.2 343,165.5 342,165.5 342,160.9 341,160.9 341,175.5 340,175.5 340,175.7 339,175.7 339,171.4 338,171.4 338,164.4 337,164.4 337,159.6 336,159.6 336,158.2 335,158.2 335,174.2 334,174.2 334,163.2 333,163.2 333,158.1 332,158.1 332,160.1 331,160.1 331,166.2 330,166.2 330,162.5 329,162.5 329,163.5 328,163.5 328,158.9 327,158.9 327,168.7 326,168.7 326,166.4 325,166.4 325,172.2 324,172.2 324,169.2 323,169.2 323,167.3 322,167.3 322,164.5 321,164.5 321,160.8 320,160.8 320,165.0 319,165.0 319,161.6 318,161.6 318,159.8 317,159.8 317,169.1 316,169.1 316,170.2 315,170.2 315,162.5 314,162.5 314,158.5 313,158.5 313,169.8 312,169.8 312,169.0 311,169.0 311,168.0 310,168.0 310,170.0 309,170.0 309,169.0 308,169.0 308,167.0 307,167.0 307,165.5 306,165.5 306,168.6 305,168.6 305,166.2 304,166.2 304,164.6 303,164.6 303,167.9 302,167.9 302,164.5 301,164.5 301,162.5 300,162.5 300,161.0 299,161.0 299,166.6 298,166.6 298,167.1 297,167.1 297,158.8 296,158.8 296,155.1 295,155.1 295,164.5 294,164.5 294,164.2 293,164.2 293,161.6 292,161.6 292,159.3 291,159.3 291,157.6 290,157.6 290,163.7 289,163.7 289,162.7 288,162.7 288,164.3 287,164.3 287,162.5 286,162.5 286,161.3 285,161.3 285,161.4 284,161.4 284,159.9 283,159.9 283,157.2 282,157.2 282,154.2 281,154.2 281,162.4 280,162.4 280,160.7 279,160.7 279,159.5 278,159.5 278,158.4 277,158.4 277,160.1 276,160.1 276,159.8 275,159.8 275,158.8 274,158.8 274,160.7 273,160.7 273,160.1 272,160.1 272,158.7 271,158.7 271,157.7 270,157.7 270,159.3 269,159.3 269,159.2 268,159.2 268,159.0 267,159.0 267,156.7 266,156.7 266,155.5 265,155.5 265,156.1 264,156.1 264,156.0 263,156.0 263,156.5 262,156.5 262,156.9 261,156.9 261,155.6 260,155.6 260,154.7 259,154.7 259,154.9 258,154.9 258,154.1 257,154.1 257,151.6 256,151.6 256,149.7 255,149.7 255,154.4 254,154.4 254,153.8 253,153.8 253,153.5 252,153.5 252,153.7 251,153.7 251,152.5 250,152.5 250,151.8 249,151.8 249,152.7 248,152.7 248,152.3 247,152.3 247,151.0 246,151.0 246,150.2 245,150.2 245,150.4 244,150.4 244,150.7 243,150.7 243,150.2 242,150.2 242,149.8 241,149.8 241,149.2 240,149.2 240,148.5 239,148.5 239,148.7 238,148.7 238,148.2 237,148.2 237,147.7 236,147.7 236,147.6 235,147.6 235,147.2 234,147.2 234,146.6 233,146.6 233,145.7 232,145.7 232,144.9 231,144.9 231,163.1 230,163.1 230,159.2 229,159.2 229,169.9 228,169.9 228,170.0 227,170.0 227,164.9 226,164.9 226,161.2 225,161.2 225,171.6 224,171.6 224,170.6 223,170.6 223,167.9 222,167.9 222,164.9 221,164.9 221,167.7 220,167.7 220,164.4 219,164.4 219,171.6 218,171.6 218,174.3 217,174.3 217,175.0 216,175.0 216,174.3 215,174.3 215,176.6 214,176.6 214,170.9 213,170.9 213,168.1 212,168.1 212,170.4 211,170.4 211,167.4 210,167.4 210,175.7 209,175.7 209,177.4 208,177.4 208,177.5 207,177.5 207,176.0 206,176.0 206,175.4 205,175.4 205,176.3 204,176.3 204,175.7 203,175.7 203,168.9 202,168.9 202,165.2 201,165.2 201,172.3 200,172.3 200,172.5 199,172.5 199,171.2 198,171.2 198,177.0 197,177.0 197,177.3 196,177.3 196,177.4 195,177.4 195,177.4 194,177.4 194,176.3 193,176.3 193,174.0 192,174.0 192,172.5 191,172.5 191,174.3 190,174.3 190,170.8 189,170.8 189,166.4 188,166.4 188,161.6 187,161.6 187,174.2 186,174.2 186,169.4 185,169.4 185,165.9 184,165.9 184,173.4 183,173.4 183,170.3 182,170.3 182,167.2 181,167.2 181,176.6 180,176.6 180,171.3 179,171.3 179,168.6 178,168.6 178,170.2 177,170.2 177,176.4 176,176.4 176,175.9 175,175.9 175,174.6 174,174.6 174,169.1 173,169.1 173,165.6 172,165.6 172,167.1 171,167.1 171,162.7 170,162.7 170,175.1 169,175.1 169,169.5 168,169.5 168,166.1 167,166.1 167,166.3 166,166.3 166,161.4 165,161.4 165,175.9 164,175.9 164,173.5 163,173.5 163,166.2 162,166.2 162,161.3 161,161.3 161,168.0 160,168.0 160,169.3 159,169.3 159,165.8 158,165.8 158,173.6 157,173.6 157,172.0 156,172.0 156,168.1 155,168.1 155,164.1 154,164.1 154,175.7 153,175.7 153,175.7 152,175.7 152,175.0 151,175.0 151,177.1 150,177.1 150,176.9 149,176.9 149,168.2 148,168.2 148,164.2 147,164.2 147,168.4 146,168.4 146,164.5 145,164.5 145,173.2 144,173.2 144,171.3 143,171.3 143,174.9 142,174.9 142,177.5 141,177.5Z" fill="#1ff0aa"/>
<path d="M24,109.7 25,109.7 25,114.4 26,114.4 26,116.0 27,116.0 27,114.0 28,114.0 28,109.5 29,109.5 29,109.8 30,109.8 30,113.0 31,113.0 31,114.5 32,114.5 32,113.0 33,113.0 33,112.3 34,112.3 34,118.3 35,118.3 35,117.2 36,117.2 36,114.9 37,114.9 37,113.4 38,113.4 38,114.6 39,114.6 39,118.0 40,118.0 40,115.4 41,115.4 41,110.0 42,110.0 42,110.6 43,110.6 43,110.2 44,110.2 44,110.1 45,110.1 45,115.2 46,115.2 46,113.5 47,113.5 47,112.9 48,112.9 48,112.5 49,112.5 49,111.6 50,111.6 50,109.5 51,109.5 51,110.1 52,110.1 52,116.4 53,116.4 53,114.3 54,114.3 54,115.0 55,115.0 55,113.3 56,113.3 56,114.8 57,114.8 57,120.9 58,120.9 58,117.5 59,117.5 59,116.7 60,116.7 60,120.1 61,120.1 61,116.9 62,116.9 62,115.5 63,115.5 63,113.7 64,113.7 64,109.5 65,109.5 65,118.5 66,118.5 66,115.8 67,115.8 67,109.8 68,109.8 68,109.7 69,109.7 69,112.2 70,112.2 70,111.4 71,111.4 71,115.1 72,115.1 72,113.4 73,113.4 73,114.0 74,114.0 74,118.1 75,118.1 75,115.5 76,115.5 76,112.0 77,112.0 77,112.1 78,112.1 78,116.5 79,116.5 79,114.4 80,114.4 80,112.2 81,112.2 81,109.6 82,109.6 82,117.2 83,117.2 83,114.9 84,114.9 84,111.3 85,111.3 85,111.2 86,111.2 86,111.6 87,111.6 87,111.0 88,111.0 88,117.3 89,117.3 89,115.0 90,115.0 90,109.6 91,109.6 91,109.8 92,109.8 92,109.9 93,109.9 93,117.3 94,117.3 94,115.0 95,115.0 95,111.6 96,111.6 96,110.1 97,110.1 97,109.9 98,109.9 98,113.3 99,113.3 99,116.5 100,116.5 100,114.4 101,114.4 101,110.8 102,110.8 102,110.4 103,110.4 103,109.7 104,109.7 104,114.0 105,114.0 105,120.2 106,120.2 106,117.0 107,117.0 107,111.1 108,111.1 108,110.6 109,110.6 109,109.7 110,109.7 110,111.8 111,111.8 111,111.1 112,111.1 112,113.0 113,113.0 113,114.0 114,114.0 114,112.7 115,112.7 115,111.7 116,111.7 116,111.0 117,111.0 117,114.4 118,114.4 118,112.9 119,112.9 119,113.0 120,113.0 120,112.4 121,112.4 121,111.5 122,111.5 122,110.9 123,110.9 123,116.0 124,116.0 124,114.0 125,114.0 125,114.5 126,114.5 126,113.0 127,113.0 127,110.4 128,110.4 128,113.4 129,113.4 129,112.2 130,112.2 130,114.4 131,114.4 131,112.9 132,112.9 132,113.9 133,113.9 133,113.2 134,113.2 134,119.2 135,119.2 135,116.3 136,116.3 136,110.0 137,110.0 137,120.9 138,120.9 138,117.5 139,117.5 139,110.5 140,110.5 140,113.2 141,113.2 141,171.4 140,171.4 140,177.3 139,177.3 139,177.4 138,177.4 138,177.0 137,177.0 137,176.7 136,176.7 136,176.2 135,176.2 135,172.9 134,172.9 134,170.9 133,170.9 133,171.7 132,171.7 132,175.2 131,175.2 131,174.2 130,174.2 130,174.8 129,174.8 129,173.2 128,173.2 128,171.4 127,171.4 127,176.0 126,176.0 126,176.6 125,176.6 125,173.0 124,173.0 124,171.1 123,171.1 123,175.3 122,175.3 122,176.6 121,176.6 121,177.3 120,177.3 120,177.1 119,177.1 119,177.0 118,177.0 118,174.5 117,174.5 117,173.2 116,173.2 116,172.6 115,172.6 115,170.5 114,170.5 114,172.0 113,172.0 113,169.6 112,169.6 112,175.8 111,175.8 111,176.0 110,176.0 110,176.7 109,176.7 109,177.0 108,177.0 108,170.6 107,170.6 107,167.6 106,167.6 106,175.1 105,175.1 105,172.0 104,172.0 104,169.6 103,169.6 103,169.0 102,169.0 102,177.5 101,177.5 101,171.0 100,171.0 100,168.2 99,168.2 99,177.3 98,177.3 98,176.9 97,176.9 97,175.8 96,175.8 96,175.1 95,175.1 95,176.5 94,176.5 94,171.7 93,171.7 93,169.3 92,169.3 92,176.5 91,176.5 91,176.1 90,176.1 90,174.6 89,174.6 89,173.4 88,173.4 88,171.3 87,171.3 87,168.7 86,168.7 86,173.3 85,173.3 85,171.5 84,171.5 84,177.4 83,177.4 83,177.4 82,177.4 82,177.0 81,177.0 81,172.4 80,172.4 80,170.2 79,170.2 79,175.7 78,175.7 78,172.1 77,172.1 77,169.8 76,169.8 76,170.9 75,170.9 75,171.9 74,171.9 74,174.7 73,174.7 73,169.9 72,169.9 72,166.7 71,166.7 71,169.8 70,169.8 70,166.5 69,166.5 69,174.1 68,174.1 68,172.0 67,172.0 67,169.6 66,169.6 66,166.5 65,166.5 65,177.3 64,177.3 64,174.2 63,174.2 63,172.8 62,172.8 62,171.4 61,171.4 61,168.8 60,168.8 60,169.4 59,169.4 59,171.7 58,171.7 58,169.3 57,169.3 57,177.4 56,177.4 56,173.9 55,173.9 55,172.3 54,172.3 54,176.6 53,176.6 53,169.6 52,169.6 52,166.2 51,166.2 51,173.3 50,173.3 50,174.3 49,174.3 49,174.7 48,174.7 48,173.5 47,173.5 47,169.4 46,169.4 46,166.0 45,166.0 45,171.4 44,171.4 44,176.2 43,176.2 43,177.5 42,177.5 42,176.8 41,176.8 41,176.6 40,176.6 40,176.2 39,176.2 39,175.7 38,175.7 38,176.6 37,176.6 37,176.2 36,176.2 36,174.7 35,174.7 35,173.4 34,173.4 34,177.3 33,177.3 33,172.8 32,172.8 32,170.8 31,170.8 31,177.3 30,177.3 30,177.0 29,177.0 29,176.8 28,176.8 28,174.4 27,174.4 27,173.0 26,173.0 26,177.4 25,177.4 25,177.4 24,177.4Z" fill="#e90f4f"/>
<path d="M9,216.2 10,216.2 10,214.6 11,214.6 11,212.5 12,212.5 12,207.6 13,207.6 13,214.9 14,214.9 14,222.4 15,222.4 15,217.9 16,217.9 16,207.9 17,207.9 17,216.9 18,216.9 18,214.1 19,214.1 19,209.8 20,209.8 20,209.1 21,209.1 21,208.5 22,208.5 22,210.4 23,210.4 23,209.5 24,209.5 24,265.3 23,265.3 23,260.9 22,260.9 22,274.7 21,274.7 21,274.3 20,274.3 20,274.7 19,274.7 19,274.7 18,274.7 18,268.1 17,268.1 17,265.0 16,265.0 16,273.2 15,273.2 15,266.4 14,266.4 14,262.5 13,262.5 13,272.4 12,272.4 12,271.0 11,271.0 11,264.0 10,264.0 10,259.1 9,259.1Z M141,208.6 142,208.6 142,208.2 143,208.2 143,210.9 144,210.9 144,209.9 145,209.9 145,207.9 146,207.9 146,212.9 147,212.9 147,211.3 148,211.3 148,210.9 149,210.9 149,216.2 150,216.2 150,213.6 151,213.6 151,223.8 152,223.8 152,218.9 153,218.9 153,218.2 154,218.2 154,217.2 155,217.2 155,227.7 156,227.7 156,221.7 157,221.7 157,207.6 158,207.6 158,217.7 159,217.7 159,214.7 160,214.7 160,214.3 161,214.3 161,214.1 162,214.1 162,225.8 163,225.8 163,220.3 164,220.3 164,209.0 165,209.0 165,218.5 166,218.5 166,215.2 167,215.2 167,208.5 168,208.5 168,208.1 169,208.1 169,207.7 170,207.7 170,211.8 171,211.8 171,210.5 172,210.5 172,210.6 173,210.6 173,217.5 174,217.5 174,214.5 175,214.5 175,213.7 176,213.7 176,227.3 177,227.3 177,221.4 178,221.4 178,214.6 179,214.6 179,215.4 180,215.4 180,213.0 181,213.0 181,210.2 182,210.2 182,208.5 183,208.5 183,209.3 184,209.3 184,212.3 185,212.3 185,228.4 186,228.4 186,222.1 187,222.1 187,222.6 188,222.6 188,219.5 189,219.5 189,215.9 190,215.9 190,212.8 191,212.8 191,211.2 192,211.2 192,228.9 193,228.9 193,222.5 194,222.5 194,210.0 195,210.0 195,219.8 196,219.8 196,223.2 197,223.2 197,218.5 198,218.5 198,229.0 199,229.0 199,222.5 200,222.5 200,212.3 201,212.3 201,210.9 202,210.9 202,214.5 203,214.5 203,212.4 204,212.4 204,215.8 205,215.8 205,213.3 206,213.3 206,209.7 207,209.7 207,216.3 208,216.3 208,213.7 209,213.7 209,208.8 210,208.8 210,229.8 211,229.8 211,223.1 212,223.1 212,208.9 213,208.9 213,227.9 214,227.9 214,226.5 215,226.5 215,225.6 216,225.6 216,220.3 217,220.3 217,220.4 218,220.4 218,216.7 219,216.7 219,215.1 220,215.1 220,222.8 221,222.8 221,218.4 222,218.4 222,215.4 223,215.4 223,214.0 224,214.0 224,212.3 225,212.3 225,221.8 226,221.8 226,217.9 227,217.9 227,209.1 228,209.1 228,210.3 229,210.3 229,213.5 230,213.5 230,225.5 231,225.5 231,239.4 232,239.4 232,239.4 233,239.4 233,238.7 234,238.7 234,239.8 235,239.8 235,238.8 236,238.8 236,237.2 237,237.2 237,236.7 238,236.7 238,237.4 239,237.4 239,237.7 240,237.7 240,236.7 241,236.7 241,235.1 242,235.1 242,236.2 243,236.2 243,235.4 244,235.4 244,235.5 245,235.5 245,234.6 246,234.6 246,234.9 247,234.9 247,234.0 248,234.0 248,232.3 249,232.3 249,232.1 250,232.1 250,231.7 251,231.7 251,236.8 252,236.8 252,235.0 253,235.0 253,233.5 254,233.5 254,231.7 255,231.7 255,235.9 256,235.9 256,233.8 257,233.8 257,232.1 258,232.1 258,232.2 259,232.2 259,232.5 260,232.5 260,234.2 261,234.2 261,232.1 262,232.1 262,228.9 263,228.9 263,227.8 264,227.8 264,229.0 265,229.0 265,228.1 266,228.1 266,226.5 267,226.5 267,227.6 268,227.6 268,226.8 269,226.8 269,226.7 270,226.7 270,226.0 271,226.0 271,225.9 272,225.9 272,225.2 273,225.2 273,228.8 274,228.8 274,230.9 275,230.9 275,228.5 276,228.5 276,231.3 277,231.3 277,230.9 278,230.9 278,228.2 279,228.2 279,227.6 280,227.6 280,225.8 281,225.8 281,224.2 282,224.2 282,232.3 283,232.3 283,228.8 284,228.8 284,232.1 285,232.1 285,228.6 286,228.6 286,220.6 287,220.6 287,220.0 288,220.0 288,219.7 289,219.7 289,222.8 290,222.8 290,224.5 291,224.5 291,222.7 292,222.7 292,230.6 293,230.6 293,226.8 294,226.8 294,218.4 295,218.4 295,223.5 296,223.5 296,221.6 297,221.6 297,219.3 298,219.3 298,222.2 299,222.2 299,220.4 300,220.4 300,218.9 301,218.9 301,224.9 302,224.9 302,222.2 303,222.2 303,219.4 304,219.4 304,218.2 305,218.2 305,230.0 306,230.0 306,225.5 307,225.5 307,215.4 308,215.4 308,221.4 309,221.4 309,219.2 310,219.2 310,222.1 311,222.1 311,221.7 312,221.7 312,219.2 313,219.2 313,224.2 314,224.2 314,220.9 315,220.9 315,219.2 316,219.2 316,217.3 317,217.3 317,216.8 318,216.8 318,226.5 319,226.5 319,223.1 320,223.1 320,219.7 321,219.7 321,225.0 322,225.0 322,221.0 323,221.0 323,215.1 324,215.1 324,215.1 325,215.1 325,215.0 326,215.0 326,213.9 327,213.9 327,227.3 328,227.3 328,222.3 329,222.3 329,216.8 330,216.8 330,211.2 331,211.2 331,211.7 332,211.7 332,227.9 333,227.9 333,222.5 334,222.5 334,215.5 335,215.5 335,226.5 336,226.5 336,221.4 337,221.4 337,217.6 338,217.6 338,209.9 339,209.9 339,214.3 340,214.3 340,212.6 341,212.6 341,211.2 342,211.2 342,212.7 343,212.7 343,225.4 344,225.4 344,220.3 345,220.3 345,213.6 346,213.6 346,216.3 347,216.3 347,213.8 348,213.8 348,226.7 349,226.7 349,221.1 350,221.1 350,222.8 351,222.8 351,218.3 352,218.3 352,226.2 353,226.2 353,220.6 354,220.6 354,211.0 355,211.0 355,209.9 356,209.9 356,214.8 357,214.8 357,212.6 358,212.6 358,208.2 359,208.2 359,212.6 360,212.6 360,215.2 361,215.2 361,212.9 362,212.9 362,211.9 363,211.9 363,210.6 364,210.6 364,207.5 365,207.5 365,212.7 366,212.7 366,216.5 367,216.5 367,213.8 368,213.8 368,214.1 369,214.1 369,221.5 370,221.5 370,217.3 371,217.3 371,223.9 372,223.9 372,218.9 373,218.9 373,220.9 374,220.9 374,216.9 375,216.9 375,214.3 376,214.3 376,212.3 377,212.3 377,219.7 378,219.7 378,216.0 379,216.0 379,222.8 380,222.8 380,222.1 381,222.1 381,217.7 382,217.7 382,213.0 383,213.0 383,226.9 384,226.9 384,221.1 385,221.1 385,212.1 386,212.1 386,221.2 387,221.2 387,217.1 388,217.1 388,207.8 389,207.8 389,224.1 390,224.1 390,219.1 391,219.1 391,209.1 392,209.1 392,210.8 393,210.8 393,209.8 394,209.8 394,211.2 395,211.2 395,210.1 396,210.1 396,208.8 397,208.8 397,209.1 398,209.1 398,215.6 399,215.6 399,225.9 400,225.9 400,220.4 401,220.4 401,227.8 402,227.8 402,221.7 403,221.7 403,211.9 404,211.9 404,214.1 405,214.1 405,214.1 406,214.1 406,220.6 407,220.6 407,216.7 408,216.7 408,220.4 409,220.4 409,216.5 410,216.5 410,208.5 411,208.5 411,210.0 412,210.0 412,209.3 413,209.3 413,208.5 414,208.5 414,208.9 415,208.9 415,218.5 416,218.5 416,215.2 417,215.2 417,209.7 418,209.7 418,207.8 419,207.8 419,222.7 420,222.7 420,218.2 421,218.2 421,215.8 422,215.8 422,213.3 423,213.3 423,207.5 424,207.5 424,208.7 425,208.7 425,208.3 426,208.3 426,207.9 427,207.9 427,228.6 428,228.6 428,222.3 429,222.3 429,218.1 430,218.1 430,225.1 431,225.1 431,219.8 432,219.8 432,219.2 433,219.2 433,215.7 434,215.7 434,211.5 435,211.5 435,219.4 436,219.4 436,215.8 437,215.8 437,208.1 438,208.1 438,213.0 439,213.0 439,211.4 440,211.4 440,207.9 441,207.9 441,212.6 442,212.6 442,216.0 443,216.0 443,213.5 444,213.5 444,209.5 445,209.5 445,213.6 446,213.6 446,211.8 447,211.8 447,208.8 448,208.8 448,208.4 449,208.4 449,216.8 450,216.8 450,214.0 451,214.0 451,218.7 452,218.7 452,215.4 453,215.4 453,220.8 454,220.8 454,216.8 455,216.8 455,212.7 456,212.7 456,214.1 457,214.1 457,215.4 458,215.4 458,213.0 459,213.0 459,210.4 460,210.4 460,209.6 461,209.6 461,218.0 462,218.0 462,214.8 463,214.8 463,221.5 464,221.5 464,217.3 465,217.3 465,222.9 466,222.9 466,218.3 467,218.3 467,207.5 468,207.5 468,208.8 469,208.8 469,208.4 470,208.4 470,210.8 471,210.8 471,209.8 472,209.8 472,216.7 473,216.7 473,220.6 474,220.6 474,220.1 475,220.1 475,220.9 476,220.9 476,216.9 477,216.9 477,207.9 478,207.9 478,223.4 479,223.4 479,224.9 480,224.9 480,228.4 481,228.4 481,225.9 482,225.9 482,220.4 483,220.4 483,210.3 484,210.3 484,208.1 485,208.1 485,211.3 486,211.3 486,210.1 487,210.1 487,212.7 488,212.7 488,211.2 489,211.2 489,207.8 490,207.8 490,208.0 491,208.0 491,210.9 492,210.9 492,209.9 493,209.9 493,209.6 494,209.6 494,224.8 495,224.8 495,219.6 496,219.6 496,222.6 497,222.6 497,218.1 498,218.1 498,208.9 499,208.9 499,208.9 500,208.9 500,222.7 501,222.7 501,218.1 502,218.1 502,211.7 503,211.7 503,208.6 504,208.6 504,214.8 505,214.8 505,212.6 506,212.6 506,220.8 507,220.8 507,216.8 508,216.8 508,225.7 509,225.7 509,220.3 510,220.3 510,219.5 511,219.5 511,215.9 512,215.9 512,215.9 513,215.9 513,213.4 514,213.4 514,211.8 515,211.8 515,213.8 516,213.8 516,211.9 517,211.9 517,212.2 518,212.2 518,225.3 519,225.3 519,220.0 520,220.0 520,209.1 521,209.1 521,210.2 522,210.2 522,223.9 523,223.9 523,219.0 524,219.0 524,210.1 525,210.1 525,216.0 526,216.0 526,213.4 527,213.4 527,211.4 528,211.4 528,224.3 529,224.3 529,219.2 530,219.2 530,210.2 531,210.2 531,209.4 532,209.4 532,214.4 533,214.4 533,212.3 534,212.3 534,207.6 535,207.6 535,214.5 536,214.5 536,212.5 537,212.5 537,219.3 538,219.3 538,215.7 539,215.7 539,207.8 540,207.8 540,222.4 541,222.4 541,221.4 542,221.4 542,217.2 543,217.2 543,208.8 544,208.8 544,214.8 545,214.8 545,212.6 546,212.6 546,211.6 547,211.6 547,210.4 548,210.4 548,207.6 549,207.6 549,208.9 550,208.9 550,208.9 551,208.9 551,222.6 552,222.6 552,218.1 553,218.1 553,219.1 554,219.1 554,215.6 555,215.6 555,212.7 556,212.7 556,224.0 557,224.0 557,219.0 558,219.0 558,222.7 559,222.7 559,218.1 560,218.1 560,216.9 561,216.9 561,214.1 562,214.1 562,210.0 563,210.0 563,222.6 564,222.6 564,266.1 563,266.1 563,275.1 562,275.1 562,267.2 561,267.2 561,263.7 560,263.7 560,268.4 559,268.4 559,265.4 558,265.4 558,271.8 557,271.8 557,267.9 556,267.9 556,263.1 555,263.1 555,257.8 554,257.8 554,264.1 553,264.1 553,259.2 552,259.2 552,271.6 551,271.6 551,273.1 550,273.1 550,273.8 549,273.8 549,274.1 548,274.1 548,273.5 547,273.5 547,270.6 546,270.6 546,267.5 545,267.5 545,264.0 544,264.0 544,272.8 543,272.8 543,271.7 542,271.7 542,274.3 541,274.3 541,269.9 540,269.9 540,267.5 539,267.5 539,270.4 538,270.4 538,265.9 537,265.9 537,261.7 536,261.7 536,258.4 535,258.4 535,264.6 534,264.6 534,269.0 533,269.0 533,268.5 532,268.5 532,265.5 531,265.5 531,275.4 530,275.4 530,271.3 529,271.3 529,269.5 528,269.5 528,273.7 527,273.7 527,270.5 526,270.5 526,268.3 525,268.3 525,275.5 524,275.5 524,270.2 523,270.2 523,267.9 522,267.9 522,269.0 521,269.0 521,266.2 520,266.2 520,273.2 519,273.2 519,272.2 518,272.2 518,274.9 517,274.9 517,275.4 516,275.4 516,275.4 515,275.4 515,264.3 514,264.3 514,259.5 513,259.5 513,257.3 512,257.3 512,274.2 511,274.2 511,274.2 510,274.2 510,270.8 509,270.8 509,268.8 508,268.8 508,268.2 507,268.2 507,265.1 506,265.1 506,272.7 505,272.7 505,273.2 504,273.2 504,261.6 503,261.6 503,255.6 502,255.6 502,273.3 501,273.3 501,272.3 500,272.3 500,270.6 499,270.6 499,268.5 498,268.5 498,269.6 497,269.6 497,267.0 496,267.0 496,273.5 495,273.5 495,273.8 494,273.8 494,273.0 493,273.0 493,274.8 492,274.8 492,263.8 491,263.8 491,258.7 490,258.7 490,269.6 489,269.6 489,267.1 488,267.1 488,268.0 487,268.0 487,264.8 486,264.8 486,274.7 485,274.7 485,275.2 484,275.2 484,262.5 483,262.5 483,256.9 482,256.9 482,265.0 481,265.0 481,260.5 480,260.5 480,275.0 479,275.0 479,274.8 478,274.8 478,275.3 477,275.3 477,268.0 476,268.0 476,260.2 475,260.2 475,253.6 474,253.6 474,264.3 473,264.3 473,259.5 472,259.5 472,261.7 471,261.7 471,255.8 470,255.8 470,271.6 469,271.6 469,260.7 468,260.7 468,254.3 467,254.3 467,267.1 466,267.1 466,263.4 465,263.4 465,270.7 464,270.7 464,267.8 463,267.8 463,259.8 462,259.8 462,253.1 461,253.1 461,270.4 460,270.4 460,268.2 459,268.2 459,269.4 458,269.4 458,271.9 457,271.9 457,272.1 456,272.1 456,274.7 455,274.7 455,274.4 454,274.4 454,272.0 453,272.0 453,268.1 452,268.1 452,264.9 451,264.9 451,264.6 450,264.6 450,275.1 449,275.1 449,273.0 448,273.0 448,271.9 447,271.9 447,271.8 446,271.8 446,270.3 445,270.3 445,271.5 444,271.5 444,274.9 443,274.9 443,263.1 442,263.1 442,257.8 441,257.8 441,266.7 440,266.7 440,272.1 439,272.1 439,270.7 438,270.7 438,271.9 437,271.9 437,266.3 436,266.3 436,262.3 435,262.3 435,263.8 434,263.8 434,258.8 433,258.8 433,274.4 432,274.4 432,274.9 431,274.9 431,274.6 430,274.6 430,269.1 429,269.1 429,266.4 428,266.4 428,272.1 427,272.1 427,266.3 426,266.3 426,261.8 425,261.8 425,256.0 424,256.0 424,262.8 423,262.8 423,257.3 422,257.3 422,255.4 421,255.4 421,271.1 420,271.1 420,269.2 419,269.2 419,272.8 418,272.8 418,260.1 417,260.1 417,253.5 416,253.5 416,266.8 415,266.8 415,263.1 414,263.1 414,263.3 413,263.3 413,258.1 412,258.1 412,273.6 411,273.6 411,269.5 410,269.5 410,261.3 409,261.3 409,255.3 408,255.3 408,270.1 407,270.1 407,267.8 406,267.8 406,273.4 405,273.4 405,275.4 404,275.4 404,275.4 403,275.4 403,275.5 402,275.5 402,275.5 401,275.5 401,267.5 400,267.5 400,264.1 399,264.1 399,273.9 398,273.9 398,260.1 397,260.1 397,253.5 396,253.5 396,275.2 395,275.2 395,275.0 394,275.0 394,274.6 393,274.6 393,272.3 392,272.3 392,259.8 391,259.8 391,253.1 390,253.1 390,275.0 389,275.0 389,264.8 388,264.8 388,260.2 387,260.2 387,261.3 386,261.3 386,265.5 385,265.5 385,261.3 384,261.3 384,259.0 383,259.0 383,264.0 382,264.0 382,271.6 381,271.6 381,270.0 380,270.0 380,274.0 379,274.0 379,270.0 378,270.0 378,259.9 377,259.9 377,253.2 376,253.2 376,258.1 375,258.1 375,264.5 374,264.5 374,275.2 373,275.2 373,261.0 372,261.0 372,254.7 371,254.7 371,258.2 370,258.2 370,268.6 369,268.6 369,265.6 368,265.6 368,262.4 367,262.4 367,256.8 366,256.8 366,267.7 365,267.7 365,273.9 364,273.9 364,273.3 363,273.3 363,268.3 362,268.3 362,265.2 361,265.2 361,272.5 360,272.5 360,269.2 359,269.2 359,266.5 358,266.5 358,272.2 357,272.2 357,270.8 356,270.8 356,271.2 355,271.2 355,269.4 354,269.4 354,272.2 353,272.2 353,270.8 352,270.8 352,271.6 351,271.6 351,270.1 350,270.1 350,274.4 349,274.4 349,261.4 348,261.4 348,255.6 347,255.6 347,263.3 346,263.3 346,258.3 345,258.3 345,269.4 344,269.4 344,267.1 343,267.1 343,268.6 342,268.6 342,266.1 341,266.1 341,270.2 340,270.2 340,268.4 339,268.4 339,266.0 338,266.0 338,269.6 337,269.6 337,273.0 336,273.0 336,271.4 335,271.4 335,270.5 334,270.5 334,272.7 333,272.7 333,272.8 332,272.8 332,265.6 331,265.6 331,262.4 330,262.4 330,270.2 329,270.2 329,268.4 328,268.4 328,266.6 327,266.6 327,268.8 326,268.8 326,261.0 325,261.0 325,256.4 324,256.4 324,260.2 323,260.2 323,255.4 322,255.4 322,267.2 321,267.2 321,265.4 320,265.4 320,267.8 319,267.8 319,266.4 318,266.4 318,264.5 317,264.5 317,262.8 316,262.8 316,259.6 315,259.6 315,263.0 314,263.0 314,266.2 313,266.2 313,264.3 312,264.3 312,262.1 311,262.1 311,261.1 310,261.1 310,257.7 309,257.7 309,259.9 308,259.9 308,263.0 307,263.0 307,260.6 306,260.6 306,261.4 305,261.4 305,267.3 304,267.3 304,260.3 303,260.3 303,257.3 302,257.3 302,263.4 301,263.4 301,261.9 300,261.9 300,266.1 299,266.1 299,265.9 298,265.9 298,261.1 297,261.1 297,259.0 296,259.0 296,265.1 295,265.1 295,260.2 294,260.2 294,258.0 293,258.0 293,261.4 292,261.4 292,259.4 291,259.4 291,255.5 290,255.5 290,251.8 289,251.8 289,253.0 288,253.0 288,260.5 287,260.5 287,259.1 286,259.1 286,259.0 285,259.0 285,257.3 284,257.3 284,255.0 283,255.0 283,260.9 282,260.9 282,261.2 281,261.2 281,258.5 280,258.5 280,257.2 279,257.2 279,259.0 278,259.0 278,258.0 277,258.0 277,253.3 276,253.3 276,250.3 275,250.3 275,255.8 274,255.8 274,254.0 273,254.0 273,255.0 272,255.0 272,253.2 271,253.2 271,255.2 270,255.2 270,253.7 269,253.7 269,255.4 268,255.4 268,254.5 267,254.5 267,253.1 266,253.1 266,256.0 265,256.0 265,256.1 264,256.1 264,255.7 263,255.7 263,255.2 262,255.2 262,252.6 261,252.6 261,251.2 260,251.2 260,254.0 259,254.0 259,253.6 258,253.6 258,250.9 257,250.9 257,249.3 256,249.3 256,248.1 255,248.1 255,252.6 254,252.6 254,250.3 253,250.3 253,249.0 252,249.0 252,251.4 251,251.4 251,250.0 250,250.0 250,247.6 249,247.6 249,245.9 248,245.9 248,247.8 247,247.8 247,246.5 246,246.5 246,249.5 245,249.5 245,249.3 244,249.3 244,248.9 243,248.9 243,248.4 242,248.4 242,246.8 241,246.8 241,245.9 240,245.9 240,247.1 239,247.1 239,246.5 238,246.5 238,246.4 237,246.4 237,245.8 236,245.8 236,246.0 235,246.0 235,245.6 234,245.6 234,245.3 233,245.3 233,243.6 232,243.6 232,242.9 231,242.9 231,269.6 230,269.6 230,269.8 229,269.8 229,262.0 228,262.0 228,256.9 227,256.9 227,261.5 226,261.5 226,256.0 225,256.0 225,274.2 224,274.2 224,268.7 223,268.7 223,266.1 222,266.1 222,270.2 221,270.2 221,274.8 220,274.8 220,274.5 219,274.5 219,274.3 218,274.3 218,271.0 217,271.0 217,269.2 216,269.2 216,268.4 215,268.4 215,268.2 214,268.2 214,274.5 213,274.5 213,265.1 212,265.1 212,260.6 211,260.6 211,273.5 210,273.5 210,272.7 209,272.7 209,267.1 208,267.1 208,263.4 207,263.4 207,273.9 206,273.9 206,275.5 205,275.5 205,275.5 204,275.5 204,275.4 203,275.4 203,274.5 202,274.5 202,272.3 201,272.3 201,270.9 200,270.9 200,270.0 199,270.0 199,267.7 198,267.7 198,265.2 197,265.2 197,271.2 196,271.2 196,262.7 195,262.7 195,257.3 194,257.3 194,272.7 193,272.7 193,270.2 192,270.2 192,267.1 191,267.1 191,263.4 190,263.4 190,266.6 189,266.6 189,262.4 188,262.4 188,256.7 187,256.7 187,259.4 186,259.4 186,260.7 185,260.7 185,254.3 184,254.3 184,262.4 183,262.4 183,256.8 182,256.8 182,255.3 181,255.3 181,275.3 180,275.3 180,271.9 179,271.9 179,260.2 178,260.2 178,253.6 177,253.6 177,269.4 176,269.4 176,273.2 175,273.2 175,272.2 174,272.2 174,267.0 173,267.0 173,263.3 172,263.3 172,260.6 171,260.6 171,271.9 170,271.9 170,265.4 169,265.4 169,261.1 168,261.1 168,272.1 167,272.1 167,270.7 166,270.7 166,268.6 165,268.6 165,270.0 164,270.0 164,267.6 163,267.6 163,274.6 162,274.6 162,275.5 161,275.5 161,274.8 160,274.8 160,274.4 159,274.4 159,274.8 158,274.8 158,259.9 157,259.9 157,253.3 156,253.3 156,269.7 155,269.7 155,267.2 154,267.2 154,267.4 153,267.4 153,273.9 152,273.9 152,262.8 151,262.8 151,257.4 150,257.4 150,274.1 149,274.1 149,275.0 148,275.0 148,261.3 147,261.3 147,255.3 146,255.3 146,263.4 145,263.4 145,262.4 144,262.4 144,256.8 143,256.8 143,267.4 142,267.4 142,271.9 141,271.9Z" fill="#1ff0aa"/>
<path d="M24,211.1 25,211.1 25,208.4 26,208.4 26,208.1 27,208.1 27,215.5 28,215.5 28,213.1 29,213.1 29,209.4 30,209.4 30,208.9 31,208.9 31,219.2 32,219.2 32,215.7 33,215.7 33,211.5 34,211.5 34,210.3 35,210.3 35,208.3 36,208.3 36,207.8 37,207.8 37,208.2 38,208.2 38,211.9 39,211.9 39,210.6 40,210.6 40,209.4 41,209.4 41,217.5 42,217.5 42,217.0 43,217.0 43,214.2 44,214.2 44,213.2 45,213.2 45,219.2 46,219.2 46,215.7 47,215.7 47,210.3 48,210.3 48,216.5 49,216.5 49,213.8 50,213.8 50,207.7 51,207.7 51,208.1 52,208.1 52,207.9 53,207.9 53,208.1 54,208.1 54,208.0 55,208.0 55,209.4 56,209.4 56,221.2 57,221.2 57,217.1 58,217.1 58,211.9 59,211.9 59,216.8 60,216.8 60,214.0 61,214.0 61,211.1 62,211.1 62,210.0 63,210.0 63,219.2 64,219.2 64,215.7 65,215.7 65,212.1 66,212.1 66,210.7 67,210.7 67,223.5 68,223.5 68,218.7 69,218.7 69,208.3 70,208.3 70,209.8 71,209.8 71,219.2 72,219.2 72,215.7 73,215.7 73,207.9 74,207.9 74,207.9 75,207.9 75,213.7 76,213.7 76,216.7 77,216.7 77,213.9 78,213.9 78,211.0 79,211.0 79,209.9 80,209.9 80,221.4 81,221.4 81,223.8 82,223.8 82,218.9 83,218.9 83,213.4 84,213.4 84,211.6 85,211.6 85,210.7 86,210.7 86,224.9 87,224.9 87,219.6 88,219.6 88,213.6 89,213.6 89,211.8 90,211.8 90,208.8 91,208.8 91,207.8 92,207.8 92,208.6 93,208.6 93,223.3 94,223.3 94,218.6 95,218.6 95,209.6 96,209.6 96,216.4 97,216.4 97,213.7 98,213.7 98,213.3 99,213.3 99,214.4 100,214.4 100,212.3 101,212.3 101,207.6 102,207.6 102,207.6 103,207.6 103,207.5 104,207.5 104,208.0 105,208.0 105,210.0 106,210.0 106,209.3 107,209.3 107,208.8 108,208.8 108,208.6 109,208.6 109,216.7 110,216.7 110,223.2 111,223.2 111,218.5 112,218.5 112,207.9 113,207.9 113,208.6 114,208.6 114,211.9 115,211.9 115,210.6 116,210.6 116,219.2 117,219.2 117,215.7 118,215.7 118,214.7 119,214.7 119,212.5 120,212.5 120,209.1 121,209.1 121,212.2 122,212.2 122,217.6 123,217.6 123,214.6 124,214.6 124,220.3 125,220.3 125,216.5 126,216.5 126,217.7 127,217.7 127,214.6 128,214.6 128,208.5 129,208.5 129,211.8 130,211.8 130,216.7 131,216.7 131,213.9 132,213.9 132,221.5 133,221.5 133,220.0 134,220.0 134,216.2 135,216.2 135,210.5 136,210.5 136,215.1 137,215.1 137,212.8 138,212.8 138,215.1 139,215.1 139,212.8 140,212.8 140,211.0 141,211.0 141,263.7 140,263.7 140,258.6 139,258.6 139,269.9 138,269.9 138,267.5 137,267.5 137,267.9 136,267.9 136,264.7 135,264.7 135,271.9 134,271.9 134,264.7 133,264.7 133,260.1 132,260.1 132,275.1 131,275.1 131,275.0 130,275.0 130,271.9 129,271.9 129,263.3 128,263.3 128,258.1 127,258.1 127,257.1 126,257.1 126,268.3 125,268.3 125,272.4 124,272.4 124,263.9 123,263.9 123,258.9 122,258.9 122,274.2 121,274.2 121,275.3 120,275.3 120,271.3 119,271.3 119,269.5 118,269.5 118,272.7 117,272.7 117,263.3 116,263.3 116,258.0 115,258.0 115,270.8 114,270.8 114,269.6 113,269.6 113,264.0 112,264.0 112,259.1 111,259.1 111,268.4 110,268.4 110,267.9 109,267.9 109,270.1 108,270.1 108,269.1 107,269.1 107,266.4 106,266.4 106,274.7 105,274.7 105,273.2 104,273.2 104,272.2 103,272.2 103,273.8 102,273.8 102,273.6 101,273.6 101,271.1 100,271.1 100,269.2 99,269.2 99,263.3 98,263.3 98,258.1 97,258.1 97,260.4 96,260.4 96,260.8 95,260.8 95,267.7 94,267.7 94,264.3 93,264.3 93,269.0 92,269.0 92,270.4 91,270.4 91,263.1 90,263.1 90,257.7 89,257.7 89,269.2 88,269.2 88,266.5 87,266.5 87,275.4 86,275.4 86,275.4 85,275.4 85,275.3 84,275.3 84,271.2 83,271.2 83,269.4 82,269.4 82,267.2 81,267.2 81,271.7 80,271.7 80,268.7 79,268.7 79,265.8 78,265.8 78,264.2 77,264.2 77,259.4 76,259.4 76,264.2 75,264.2 75,264.8 74,264.8 74,260.3 73,260.3 73,264.1 72,264.1 72,259.2 71,259.2 71,270.9 70,270.9 70,275.5 69,275.5 69,273.0 68,273.0 68,272.0 67,272.0 67,262.1 66,262.1 66,256.4 65,256.4 65,259.0 64,259.0 64,266.3 63,266.3 63,274.3 62,274.3 62,273.6 61,273.6 61,263.9 60,263.9 60,259.0 59,259.0 59,272.6 58,272.6 58,271.3 57,271.3 57,265.1 56,265.1 56,260.7 55,260.7 55,268.8 54,268.8 54,270.2 53,270.2 53,267.4 52,267.4 52,264.0 51,264.0 51,259.3 50,259.3 50,274.3 49,274.3 49,274.3 48,274.3 48,272.8 47,272.8 47,264.1 46,264.1 46,259.2 45,259.2 45,267.0 44,267.0 44,266.7 43,266.7 43,265.2 42,265.2 42,273.4 41,273.4 41,274.7 40,274.7 40,274.2 39,274.2 39,264.9 38,264.9 38,260.4 37,260.4 37,269.3 36,269.3 36,275.0 35,275.0 35,274.2 34,274.2 34,273.6 33,273.6 33,268.5 32,268.5 32,265.5 31,265.5 31,267.8 30,267.8 30,265.5 29,265.5 29,274.8 28,274.8 28,274.5 27,274.5 27,268.8 26,268.8 26,265.9 25,265.9 25,273.6 24,273.6Z" fill="#e90f4f"/>
<line x1="24.5" y1="95" x2="24.5" y2="291" stroke="#202098" stroke-width="1" stroke-dasharray="1.5 2"/>
</svg>
<div class="a" id="dbcol"></div>
<div class="a db" style="top:104px">0db</div>
<div class="a db" style="top:140px">-90db</div>
<div class="a db" style="top:176px">0db</div>
<div class="a db" style="top:203px">0db</div>
<div class="a db" style="top:239px">-90db</div>
<div class="a db" style="top:274px">0db</div>

<div class="a" id="hscroll"></div>
<svg class="a" style="left:11px;top:294px" width="8" height="8"><path d="M5.5 1 L2 3.8 L5.5 6.6Z" fill="#3a3a3a"/></svg>
<svg class="a" style="left:582px;top:294px" width="8" height="8"><path d="M2.5 1 L6 3.8 L2.5 6.6Z" fill="#3a3a3a"/></svg>
<div class="a" style="left:255px;top:293px;width:47px;height:11px;border:1px solid #9b9b9b;border-radius:2px;background:linear-gradient(#f4f4f4,#e2e2e2 50%,#d6d6d6)"></div>
<div class="a" style="left:274px;top:296px;width:8px;height:5px;background:repeating-linear-gradient(90deg,#555 0 1px,transparent 1px 2px)"></div>

<div class="a" id="tabarea"></div>
<div class="a" style="left:8px;top:304px;width:584px;height:1px;background:#c8c8c8"></div>
<div class="a" id="panel"></div>
<div class="a" id="tab"></div>
<div class="a" style="left:13px;top:311px;font-size:10px;color:#1e1e1e">Main</div>
<div class="a" style="left:63px;top:310px;width:515px;height:12px;border:1px solid #a8a8a8;border-radius:2px;background:linear-gradient(#f3f3f3,#e0e0e0 50%,#cfcfcf 51%,#dadada)"></div>
<div class="a" style="left:64px;top:311px;width:426px;height:10px;background:linear-gradient(#c9f7c9,#8ae88e 45%,#14c82a 50%,#1ad734 100%)"></div>

<!-- Selection group -->
<div class="a gb" style="left:18px;top:339px;width:213px;height:94px"></div>
<div class="a gl" style="left:26px;top:335px">Selection</div>
<div class="a" style="left:24px;top:364px">Begin:</div>
<div class="a tb" style="left:63px;top:357px;width:76px;height:17px">01:54.502</div>
<div class="a btn" style="left:147px;top:356px;width:70px;height:18px">Pick</div>
<div class="a" style="left:24px;top:392px">End:</div>
<div class="a tb" style="left:63px;top:387px;width:76px;height:17px">01:59.568</div>
<div class="a btn" style="left:147px;top:386px;width:70px;height:18px">Pick</div>
<div class="a" style="left:63px;top:414px;width:11px;height:11px;border:1px solid #8e8f8f;background:linear-gradient(#dcdcdc,#fff)"></div>
<svg class="a" style="left:64px;top:415px" width="9" height="9"><path d="M1.5 4.5 L3.8 7.5 L8 1" stroke="#2a3e8a" stroke-width="1.6" fill="none"/></svg>
<div class="a" style="left:76px;top:415px">Selected</div>

<!-- Cursor group -->
<div class="a gb" style="left:238px;top:341px;width:279px;height:36px"></div>
<div class="a gl" style="left:246px;top:337px">Cursor</div>
<div class="a" style="left:316px;top:343px;font-size:29px;font-weight:bold;color:#000">01:54.502</div>
<!-- Levels group -->
<div class="a gb" style="left:238px;top:389px;width:279px;height:43px"></div>
<div class="a gl" style="left:246px;top:386px">Levels</div>
<div class="a" style="left:251px;top:403px;width:252px;height:21px;background:#000"></div>
<!-- Volume group -->
<div class="a gb" style="left:524px;top:340px;width:55px;height:93px"></div>
<div class="a gl" style="left:529px;top:335px">Volume</div>
<div class="a" style="left:552px;top:354px;width:2px;height:66px;background:#b7b7b7;border-right:1px solid #eee"></div>
<div class="a" style="left:541px;top:360px;width:3px;height:56px;background:repeating-linear-gradient(#bdbdbd 0 1px,transparent 1px 3px)"></div>
<div class="a" style="left:564px;top:360px;width:3px;height:56px;background:repeating-linear-gradient(#bdbdbd 0 1px,transparent 1px 3px)"></div>
<div class="a" style="left:545px;top:374px;width:17px;height:10px;border:1px solid #727272;border-radius:2px;box-shadow:inset 0 0 0 1px #e8e8e8;background:linear-gradient(#f0f0f0,#d8d8d8)"></div>

<div class="a" id="status"></div>
<div class="a" style="left:1px;top:466px;width:598px;height:2px;background:linear-gradient(#8fd6f0,#5ec8ec)"></div>
<div class="a st" style="left:9px;letter-spacing:0.08px">Format: 44100 Hz, 2 Ch.</div>
<div class="a ssep" style="left:139px"></div>
<div class="a st" style="left:145px;letter-spacing:0.1px">Cursor Position: 01:54.502</div>
<div class="a ssep" style="left:272px"></div>
<div class="a st" style="left:277px;letter-spacing:0.38px">Max. Amplitude: 0 dB</div>
<div class="a ssep" style="left:406px"></div>
<div class="a st" style="left:411px;letter-spacing:0.05px">Duration: 0:04:33.214</div>
<div class="a" style="left:592px;top:27px;width:2px;height:435px;background:linear-gradient(90deg,#d6e6f5,#c4d9ef)"></div>
<div class="a" style="left:1px;top:27px;width:1px;height:439px;background:#d2e2f3"></div>
<svg class="a" style="left:583px;top:448px" width="9" height="13">
<g fill="#b8b8b8"><rect x="6" y="2" width="1.5" height="1.5"/><rect x="6" y="5" width="1.5" height="1.5"/><rect x="3" y="5" width="1.5" height="1.5"/><rect x="6" y="8" width="1.5" height="1.5"/><rect x="3" y="8" width="1.5" height="1.5"/><rect x="0" y="8" width="1.5" height="1.5"/><rect x="6" y="11" width="1.5" height="1.5"/><rect x="3" y="11" width="1.5" height="1.5"/><rect x="0" y="11" width="1.5" height="1.5"/></g></svg>
</body></html>
